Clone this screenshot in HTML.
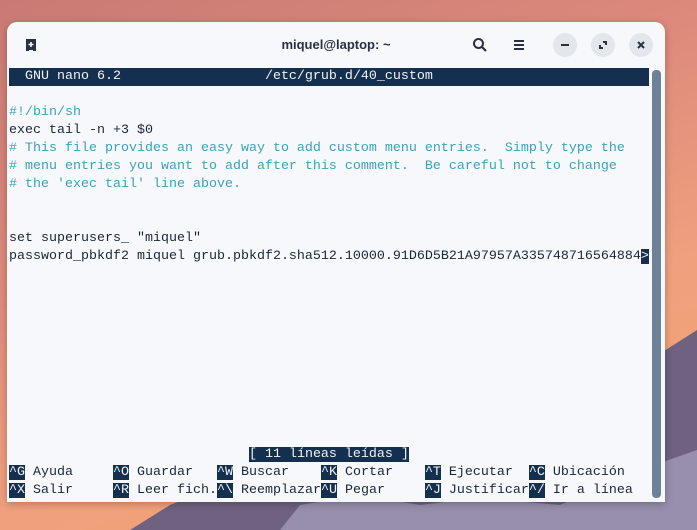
<!DOCTYPE html>
<html><head><meta charset="utf-8"><style>
*{margin:0;padding:0;box-sizing:border-box}
html,body{width:697px;height:530px;overflow:hidden}
body{position:relative;background:linear-gradient(160deg,#c97a74 0%,#dd8a7c 35%,#f0a07e 65%,#f4a56c 100%);font-family:"Liberation Sans",sans-serif}
.win{position:absolute;left:7px;top:22px;width:658px;height:480px;background:#f6f8fb;border-radius:10px 10px 0 0;overflow:hidden;box-shadow:0 2px 8px rgba(0,0,0,.25)}
.title{position:absolute;left:0;right:0;top:0;height:46px;text-align:center;font-weight:bold;font-size:13px;color:#2a3140;line-height:46px}
.btn{position:absolute;top:11px;width:24px;height:24px;border-radius:12px;background:#e3e6ea}
.term{position:absolute;left:2px;top:46px;font-family:"Liberation Mono",monospace;font-size:13.33px;line-height:18px;color:#1a2638}
.row{height:18px;white-space:pre}
.c{color:#3aa3b8}
.inv{background:#15304f;color:#f0f3f7}
.sb{position:absolute;left:645px;top:48px;width:9px;height:428px;background:#6e8197;border-radius:4px}
</style></head><body>
<svg style="position:absolute;left:0;top:0" width="697" height="530"><polygon points="130,530 170,505 220,485 300,470 380,462 450,470 520,470 600,420 650,360 697,330 697,530" fill="#6e6280"/><polygon points="300,505 360,495 420,505 480,498 560,505 640,470 697,450 697,530 280,530" fill="#a9a3c0" opacity=".7"/></svg>
<div class="win">
<div class="title">miquel@laptop: ~</div>
<svg style="position:absolute;left:17px;top:16px" width="14" height="14"><path d="M2 1h10v12h-3v-1h-4v1H2z" fill="#2a3140"/><path d="M7 4v5M4.5 6.5h5" stroke="#f6f8fb" stroke-width="1.6"/></svg>
<svg style="position:absolute;left:465px;top:15px" width="16" height="16"><circle cx="6.5" cy="6.5" r="4.5" fill="none" stroke="#2a3140" stroke-width="2"/><path d="M10 10l4 4" stroke="#2a3140" stroke-width="2.2"/></svg>
<svg style="position:absolute;left:506px;top:17px" width="12" height="12"><path d="M1 2h10M1 6h10M1 10h10" stroke="#2a3140" stroke-width="2"/></svg>
<div class="btn" style="left:546px"><div style="position:absolute;left:8px;top:11px;width:8px;height:2px;background:#2a3140"></div></div>
<div class="btn" style="left:584px"><svg width="24" height="24"><path d="M9 12v3h3M12 9h3v3" fill="none" stroke="#2a3140" stroke-width="2"/></svg></div>
<div class="btn" style="left:622px"><svg width="24" height="24"><path d="M9 9l6 6M15 9l-6 6" stroke="#2a3140" stroke-width="2"/></svg></div>
<div class="term"><div class="row inv" style="width:640px">  GNU nano 6.2                  /etc/grub.d/40_custom</div><div class="row"> </div><div class="row c">#!/bin/sh</div><div class="row">exec tail -n +3 $0</div><div class="row c"># This file provides an easy way to add custom menu entries.  Simply type the</div><div class="row c"># menu entries you want to add after this comment.  Be careful not to change</div><div class="row c"># the 'exec tail' line above.</div><div class="row"> </div><div class="row"> </div><div class="row">set superusers_ "miquel"</div><div class="row">password_pbkdf2 miquel grub.pbkdf2.sha512.10000.91D6D5B21A97957A335748716564884<span class="inv">&gt;</span></div><div class="row"> </div><div class="row"> </div><div class="row"> </div><div class="row"> </div><div class="row"> </div><div class="row"> </div><div class="row"> </div><div class="row"> </div><div class="row"> </div><div class="row"> </div><div class="row">                              <span class="inv">[ 11 líneas leídas ]</span></div><div class="row"><span class="inv">^G</span> Ayuda     <span class="inv">^O</span> Guardar   <span class="inv">^W</span> Buscar    <span class="inv">^K</span> Cortar    <span class="inv">^T</span> Ejecutar  <span class="inv">^C</span> Ubicación</div><div class="row"><span class="inv">^X</span> Salir     <span class="inv">^R</span> Leer fich.<span class="inv">^\</span> Reemplazar<span class="inv">^U</span> Pegar     <span class="inv">^J</span> Justificar<span class="inv">^/</span> Ir a línea</div></div>
<div class="sb"></div>
</div>
</body></html>
